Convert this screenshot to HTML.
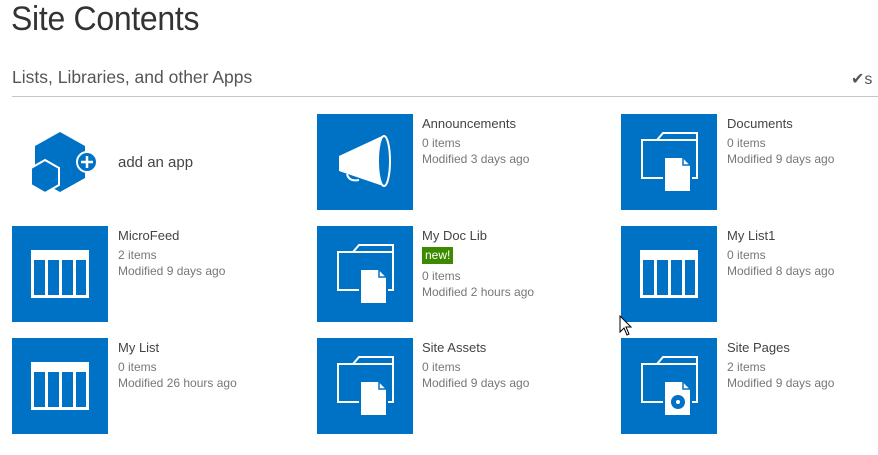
<!DOCTYPE html>
<html><head><meta charset="utf-8"><style>
body{margin:0;width:878px;height:455px;background:#fff;font-family:"Liberation Sans",sans-serif;position:relative;overflow:hidden}
.a{position:absolute}
h1{position:absolute;left:11px;top:0px;margin:0;font-weight:normal;font-size:34px;color:#333;letter-spacing:-0.3px;transform:scaleX(0.94);transform-origin:left}
.sub{left:12px;top:67px;font-size:17.5px;color:#555}
.line{left:12px;top:96px;width:866px;height:1px;background:#c6c6c6}
.t{position:absolute;width:96px;height:96px;background:#0072c6}
.t svg{display:block}
.tt{position:absolute;font-size:13px;color:#444;line-height:18px}
.tt .m{color:#777;font-size:12px;line-height:16px}
.tt .m1{margin-top:2px}
.new{display:inline-block;background:#3b8a00;color:#fff;font-size:12px;padding:0 3px;line-height:17px;margin:2px 0 4px;vertical-align:top}
</style></head><body>
<h1>Site Contents</h1>
<div class="a sub">Lists, Libraries, and other Apps</div>
<div class="a" style="left:851px;top:69px;font-size:16px;color:#555">&#10004;s</div>
<div class="a line"></div>

<svg class="a" style="left:28px;top:130px" width="72" height="65" viewBox="0 0 72 65">
<polygon points="32,2 57,16 57,48 32,62 7,48 7,16" fill="#0072c6"/>
<polygon points="17,30 31,38 31,55 17,63 3,55 3,38" fill="#0072c6" stroke="#fff" stroke-width="2"/>
<circle cx="59" cy="32" r="10" fill="#0072c6" stroke="#fff" stroke-width="2"/>
<path d="M53 32h12M59 26v12" stroke="#fff" stroke-width="2.5"/>
</svg>
<div class="a" style="left:118px;top:154px;font-size:15px;color:#444">add an app</div>

<div class="t" style="left:317px;top:114px"><svg width="96" height="96"><path d="M22 42 L65 22 L66 72 L22 57 Z" fill="#fff"/><ellipse cx="67" cy="47" rx="6" ry="25" fill="#0072c6" stroke="#fff" stroke-width="2"/><path d="M30 60 q2 8 12 6" stroke="#fff" stroke-width="2" fill="none"/></svg></div>
<div class="tt" style="left:422px;top:115px"><div>Announcements</div><div class="m m1">0 items</div><div class="m">Modified 3 days ago</div></div>

<div class="t" style="left:621px;top:114px"><svg width="96" height="96"><use href="#fold"/></svg></div>
<div class="tt" style="left:727px;top:115px"><div>Documents</div><div class="m m1">0 items</div><div class="m">Modified 9 days ago</div></div>

<div class="t" style="left:12px;top:226px"><svg width="96" height="96"><use href="#tbl"/></svg></div>
<div class="tt" style="left:118px;top:227px"><div>MicroFeed</div><div class="m m1">2 items</div><div class="m">Modified 9 days ago</div></div>

<div class="t" style="left:317px;top:226px"><svg width="96" height="96"><use href="#fold"/></svg></div>
<div class="tt" style="left:422px;top:227px"><div>My Doc Lib</div><div style="height:23px"><span class="new">new!</span></div><div class="m">0 items</div><div class="m">Modified 2 hours ago</div></div>

<div class="t" style="left:621px;top:226px"><svg width="96" height="96"><use href="#tbl"/></svg></div>
<div class="tt" style="left:727px;top:227px"><div>My List1</div><div class="m m1">0 items</div><div class="m">Modified 8 days ago</div></div>

<div class="t" style="left:12px;top:338px"><svg width="96" height="96"><use href="#tbl"/></svg></div>
<div class="tt" style="left:118px;top:339px"><div>My List</div><div class="m m1">0 items</div><div class="m">Modified 26 hours ago</div></div>

<div class="t" style="left:317px;top:338px"><svg width="96" height="96"><use href="#fold"/></svg></div>
<div class="tt" style="left:422px;top:339px"><div>Site Assets</div><div class="m m1">0 items</div><div class="m">Modified 9 days ago</div></div>

<div class="t" style="left:621px;top:338px"><svg width="96" height="96"><use href="#fold"/><circle cx="57" cy="64" r="7" fill="#0072c6"/><circle cx="57" cy="64" r="2" fill="#fff"/></svg></div>
<div class="tt" style="left:727px;top:339px"><div>Site Pages</div><div class="m m1">2 items</div><div class="m">Modified 9 days ago</div></div>

<svg class="a" style="left:619px;top:315px" width="14" height="22"><path d="M1 1 V17 L5 13 L8 20 L10 19 L7 12 L12 12 Z" fill="#fff" stroke="#000" stroke-width="1"/></svg>

<svg width="0" height="0" style="position:absolute"><defs>
<g id="fold"><path d="M21 64 V26 H36 L42 19 H76 V64 Z" fill="none" stroke="#fff" stroke-width="2"/><path d="M36 26 H76" stroke="#fff" stroke-width="2"/><path d="M43 43 H62 L70 51 V78 H43 Z" fill="#fff" stroke="#0072c6" stroke-width="2"/><path d="M62 43 V51 H70" fill="none" stroke="#0072c6" stroke-width="1.5"/></g>
<g id="tbl"><rect x="19" y="24" width="58" height="48" fill="#fff"/><rect x="22" y="34" width="11" height="35" fill="#0072c6"/><rect x="36" y="34" width="11" height="35" fill="#0072c6"/><rect x="50" y="34" width="11" height="35" fill="#0072c6"/><rect x="64" y="34" width="10" height="35" fill="#0072c6"/></g>
</defs></svg>
</body></html>
